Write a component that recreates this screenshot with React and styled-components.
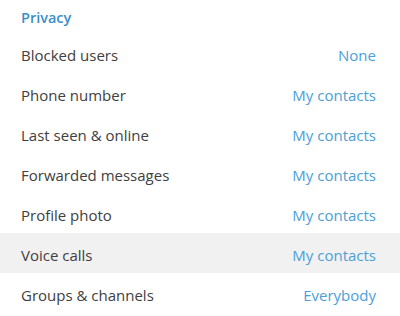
import styled, { createGlobalStyle } from "styled-components";

const GlobalStyle = createGlobalStyle`
  body {
    margin: 0;
    background: #fff;
    font-family: "Open Sans", "Noto Sans", sans-serif;
  }
`;

const rows = [
  { label: "Blocked users", value: "None" },
  { label: "Phone number", value: "My contacts" },
  { label: "Last seen & online", value: "My contacts" },
  { label: "Forwarded messages", value: "My contacts" },
  { label: "Profile photo", value: "My contacts" },
  { label: "Voice calls", value: "My contacts", active: true },
  { label: "Groups & channels", value: "Everybody" },
];

const App = () => {
  return (
    <Section>
      <GlobalStyle />
      <Header>Privacy</Header>
      {rows.map((row) => (
        <Row key={row.label} $active={row.active}>
          <Label>{row.label}</Label>
          <Value>{row.value}</Value>
        </Row>
      ))}
    </Section>
  );
};

const Section = styled.div`
  width: 400px;
  height: 316px;
  display: flex;
  flex-direction: column;
  background: #fff;
`;

const Header = styled.div`
  height: 33px;
  display: flex;
  align-items: center;
  padding: 1px 21px 0;
  box-sizing: border-box;
  font-size: 14.5px;
  font-weight: 600;
  color: #3a8fc8;
`;

const Row = styled.div`
  height: 40px;
  display: flex;
  align-items: center;
  justify-content: space-between;
  padding: 3px 24px 0 21px;
  box-sizing: border-box;
  background: ${(p) => (p.$active ? "#f1f1f1" : "transparent")};
`;

const Label = styled.span`
  font-size: 15px;
  color: #404040;
`;

const Value = styled.span`
  font-size: 15px;
  color: #4ba0d8;
`;

export default App;
